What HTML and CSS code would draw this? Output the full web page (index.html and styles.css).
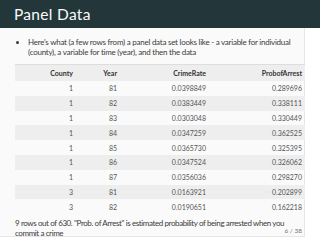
FILE: index.html
```html
<!DOCTYPE html>
<html>
<head>
<meta charset="utf-8">
<link rel="stylesheet" href="styles.css">
</head>
<body>
<div class="slide">
  <header class="title-bar"><h1>Panel Data</h1></header>
  <div class="content">
    <ul class="bullets">
      <li>Here's what (a few rows from) a panel data set looks like - a variable for individual (county), a variable for time (year), and then the data</li>
    </ul>
    <table class="data">
      <thead>
        <tr><th class="c1">County</th><th class="c2">Year</th><th class="c3">CrimeRate</th><th class="c4">ProbofArrest</th></tr>
      </thead>
      <tbody>
        <tr><td>1</td><td>81</td><td>0.0398849</td><td>0.289696</td></tr>
        <tr><td>1</td><td>82</td><td>0.0383449</td><td>0.338111</td></tr>
        <tr><td>1</td><td>83</td><td>0.0303048</td><td>0.330449</td></tr>
        <tr><td>1</td><td>84</td><td>0.0347259</td><td>0.362525</td></tr>
        <tr><td>1</td><td>85</td><td>0.0365730</td><td>0.325395</td></tr>
        <tr><td>1</td><td>86</td><td>0.0347524</td><td>0.326062</td></tr>
        <tr><td>1</td><td>87</td><td>0.0356036</td><td>0.298270</td></tr>
        <tr><td>3</td><td>81</td><td>0.0163921</td><td>0.202899</td></tr>
        <tr><td>3</td><td>82</td><td>0.0190651</td><td>0.162218</td></tr>
      </tbody>
    </table>
    <p class="note">9 rows out of 630. "Prob. of Arrest" is estimated probability of being arrested when you commit a crime</p>
  </div>
  <div class="page-num">6 / 38</div>
</div>
</body>
</html>
```
FILE: styles.css
```css
html, body {
  margin: 0;
  padding: 0;
  background: #ffffff;
  width: 320px;
  height: 240px;
  overflow: hidden;
}
.slide {
  position: relative;
  width: 305px;
  height: 237px;
  background: #fafafa;
  border-right: 1px solid #e6e6e6;
  border-bottom: 1px solid #e6e6e6;
  box-sizing: border-box;
  font-family: Lato, "Noto Sans", sans-serif;
  color: #3a3a3a;
}
.title-bar {
  width: 320px;
  height: 28px;
  background: #23373b;
  display: flex;
  align-items: center;
  padding-left: 14px;
  box-sizing: border-box;
}
.title-bar h1 {
  margin: 0 0 1px 0;
  font-size: 15.5px;
  font-weight: 400;
  color: #fafafa;
  letter-spacing: 0.3px;
}
.content {
  padding: 0 0 0 15px;
}
.bullets {
  margin: 9px 0 0 0;
  padding-left: 13px;
  font-size: 8px;
  line-height: 10px;
  letter-spacing: -0.25px;
}
.bullets li {
  padding-right: 12px;
}
.data {
  margin-top: 7px;
  width: 290px;
  border-collapse: collapse;
  font-size: 7px;
  border-top: 1px solid #dddddd;
}
.data th, .data td {
  text-align: right;
  padding: 0 3px 0 0;
}
.data th {
  height: 16px;
  font-weight: 700;
  background: #eeeeee;
  color: #333;
}
.data td {
  height: 14.8px;
  color: #555;
}
.data tbody tr:nth-child(even) td {
  background: #eeeeee;
}
.c1 { width: 58px; }
.c2 { width: 41px; }
.c3 { width: 86px; }
.note {
  margin: 4px 0 0 0;
  font-size: 8px;
  line-height: 10px;
  letter-spacing: -0.4px;
  padding-right: 12px;
}
.page-num {
  position: absolute;
  right: 2px;
  bottom: 2px;
  font-size: 6.5px;
  color: #777;
}
```
